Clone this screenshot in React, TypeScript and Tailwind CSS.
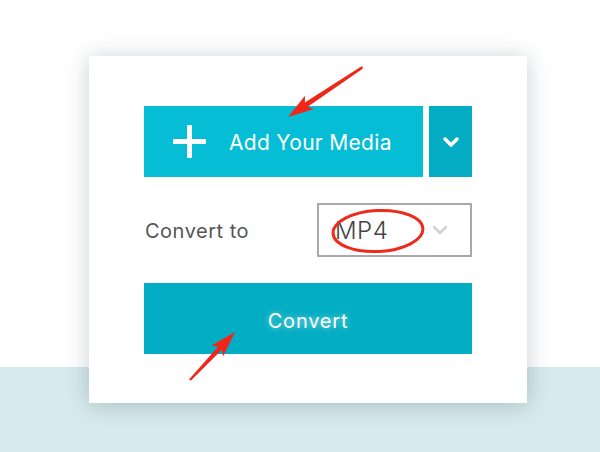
import { ChevronDown } from "lucide-react";

const App = () => {
  return (
    <div
      className="relative h-[452px] w-[600px] overflow-hidden bg-[linear-gradient(to_bottom,#ffffff_367px,#d7eaed_367px)]"
      style={{ fontFamily: "Inter, 'Open Sans', sans-serif" }}
    >
      <div className="ml-[89px] mt-[56px] h-[347px] w-[438px] bg-white pl-[55px] pt-[50px] shadow-[0_2px_22px_rgba(0,40,50,0.22)]">
        <div className="flex w-[328px] flex-col">
          {/* Add media */}
          <div className="flex h-[71px] gap-[6px]">
            <button className="flex h-full w-[279px] items-center bg-[#05bdd4] pl-[29px] text-white">
              <svg width="33" height="33" viewBox="0 0 33 33" fill="#ffffff">
                <rect x="14" y="0" width="5" height="33" rx="1" />
                <rect x="0" y="14" width="33" height="5" rx="1" />
              </svg>
              <span className="ml-[23px] pt-[3px] text-[21px] tracking-[0.3px]">Add Your Media</span>
            </button>
            <button className="flex h-full w-[43px] items-center justify-center bg-[#04adc3] text-white">
              <ChevronDown className="h-[24px] w-[24px]" strokeWidth={3.5} />
            </button>
          </div>

          {/* Convert to */}
          <div className="mt-[26px] flex h-[54px] items-center">
            <span className="ml-[1px] pt-[2px] text-[20px] tracking-[0.5px] text-[#555555]">Convert to</span>
            <div className="ml-auto flex h-full w-[155px] items-center border-2 border-[#a9a9a9] pl-[16px]">
              <span className="w-[93px] pt-[2px] text-[24px] font-light tracking-[0.5px] text-[#444444]">MP4</span>
              <ChevronDown className="h-[24px] w-[24px] text-[#d2d2d2]" strokeWidth={2.5} />
            </div>
          </div>

          {/* Convert */}
          <button className="mt-[26px] flex h-[71px] w-[328px] items-center justify-center bg-[#03adc3] pt-[4px] text-[20px] tracking-[0.8px] text-white [text-shadow:0_0_6px_rgba(255,255,255,0.6)]">
            Convert
          </button>
        </div>
      </div>

      {/* annotations */}
      <svg className="pointer-events-none absolute left-0 top-0" width="600" height="452" viewBox="0 0 600 452">
        <polygon points="288,117 305,95.8 304.9,102.6 362,66 363,68.5 307.7,106.8 314,109" fill="#f0261a" />
        <polygon points="235,332 211.5,345.6 218.2,346.4 189,379.5 191,380.5 221.8,349.8 223.1,356.4" fill="#f0261a" />
        <ellipse cx="378" cy="231" rx="45" ry="20.5" fill="none" stroke="#ee2a1c" strokeWidth="3" transform="rotate(-3 378 231)" />
      </svg>
    </div>
  );
};

export default App;
